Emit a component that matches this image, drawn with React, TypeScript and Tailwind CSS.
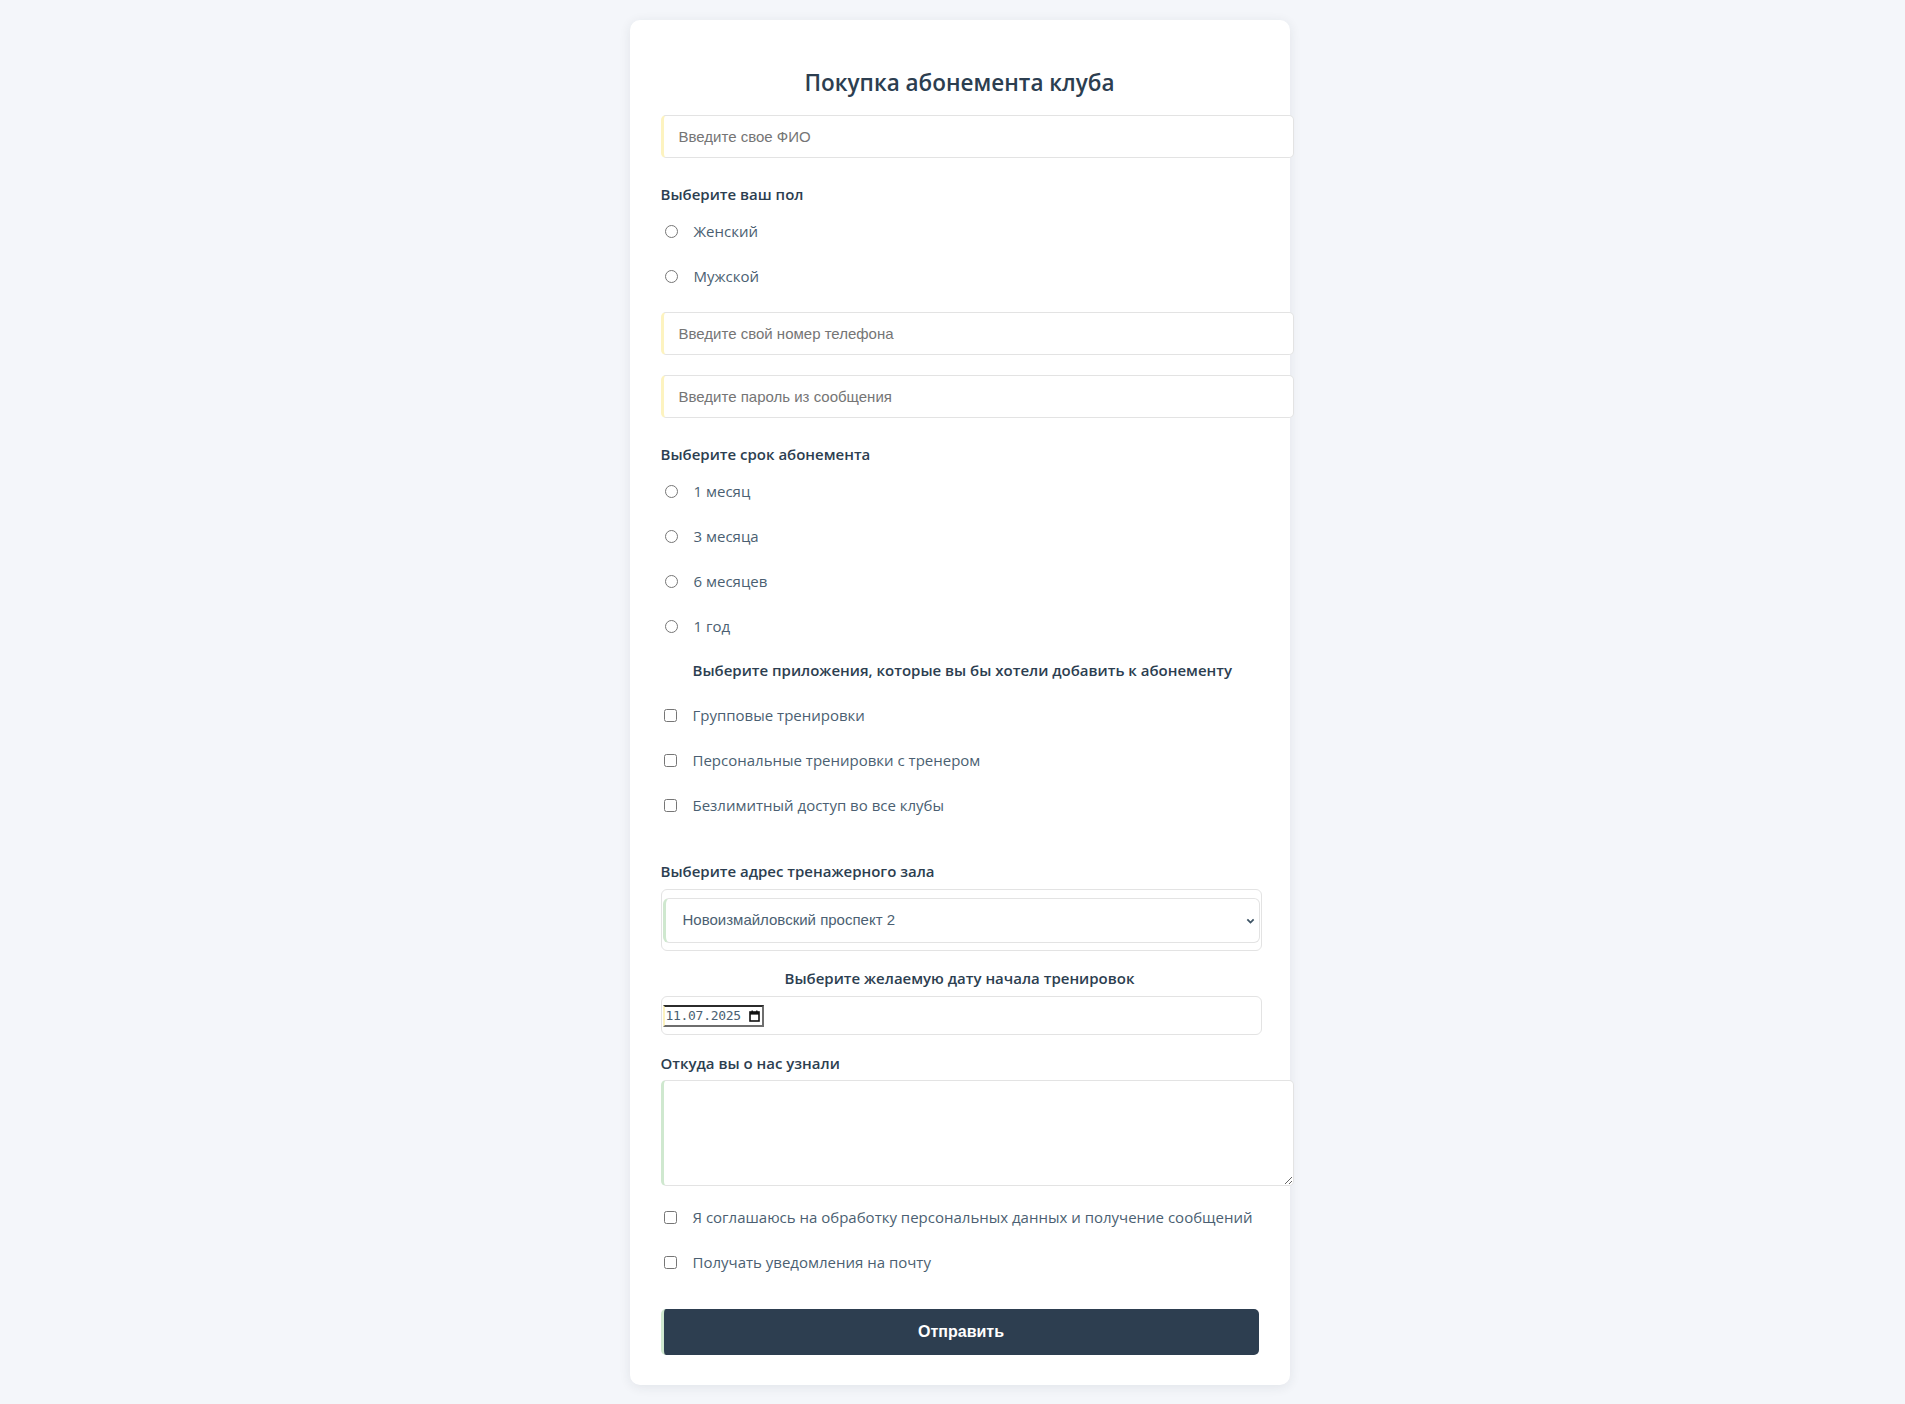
import { useState } from "react";

const sans = "font-['Open_Sans','Noto_Sans',sans-serif]";
const arial = "font-['Liberation_Sans',Arial,sans-serif]";

function FieldLabel({ children, center }: { children: React.ReactNode; center?: boolean }) {
  return (
    <div
      className={`${sans} h-5 text-[15px] font-semibold leading-5 text-[#2c3e50] ${
        center ? "text-center" : ""
      }`}
    >
      {children}
    </div>
  );
}

function TextInput({ placeholder }: { placeholder: string }) {
  return (
    <input
      type="text"
      placeholder={placeholder}
      className={`${arial} block h-[43px] w-[633px] rounded-[5px] border border-l-[3px] border-[#e3e3e3] border-l-[#fdf3c0] bg-white pl-[15px] text-[15px] text-[#333] outline-none placeholder:text-[#757575]`}
    />
  );
}

function Choice({
  type,
  name,
  label,
}: {
  type: "radio" | "checkbox";
  name: string;
  label: string;
}) {
  return (
    <label className="flex h-[25px] items-center">
      <input
        type={type}
        name={name}
        className={`m-0 h-[13px] w-[13px] shrink-0 ${type === "radio" ? "ml-[4px]" : "ml-[3px]"}`}
      />
      <span className={`${sans} ml-[16px] text-[15px] text-[#4b5f72]`}>{label}</span>
    </label>
  );
}

// native date input follows the browser locale, so the ru format is drawn by hand
function DateField({ value }: { value: string }) {
  return (
    <div className="flex h-[22px] w-[101px] items-center justify-between border-2 border-t-[#2b2b2b] border-r-[#6e6e6e] border-b-[#6e6e6e] border-l-[#fdf3c0] bg-white pr-[2px] pl-[1px]">
      <span className="font-['DejaVu_Sans_Mono',monospace] text-[13px] leading-none tracking-[-0.3px] text-[#4b5f72]">
        {value}
      </span>
      <svg className="h-[12px] w-[11px] shrink-0" viewBox="0 0 11 12" fill="none">
        <rect x="1" y="2" width="9" height="9" stroke="#111" strokeWidth="1.6" />
        <rect x="1" y="2" width="9" height="2.6" fill="#111" />
        <path d="M3.2 0.5v2.2M7.8 0.5v2.2" stroke="#111" strokeWidth="1.4" />
      </svg>
    </div>
  );
}

export default function App() {
  const [date] = useState("11.07.2025");

  return (
    <div className="min-h-screen bg-[#f4f6fa] pt-[20px] pb-5 pl-[14px]">
      <form
        className="mx-auto w-[660px] rounded-[10px] bg-white px-[31px] pt-[47px] pb-[30px] shadow-[0_2px_12px_rgba(30,40,60,0.09)]"
        onSubmit={(e) => e.preventDefault()}
      >
        <h1
          className={`${sans} text-center text-[22.5px] font-semibold leading-[32px] text-[#2c3e50]`}
        >
          Покупка абонемента клуба
        </h1>

        <div className="mt-[16px]">
          <TextInput placeholder="Введите свое ФИО" />
        </div>

        <div className="mt-[26px]">
          <FieldLabel>Выберите ваш пол</FieldLabel>
        </div>
        <div className="mt-[15px] flex flex-col gap-[20px]">
          <Choice type="radio" name="sex" label="Женский" />
          <Choice type="radio" name="sex" label="Мужской" />
        </div>

        <div className="mt-[23px] flex flex-col gap-[20px]">
          <TextInput placeholder="Введите свой номер телефона" />
          <TextInput placeholder="Введите пароль из сообщения" />
        </div>

        <div className="mt-[26px]">
          <FieldLabel>Выберите срок абонемента</FieldLabel>
        </div>
        <div className="mt-[15px] flex flex-col gap-[20px]">
          <Choice type="radio" name="term" label="1 месяц" />
          <Choice type="radio" name="term" label="3 месяца" />
          <Choice type="radio" name="term" label="6 месяцев" />
          <Choice type="radio" name="term" label="1 год" />
        </div>

        <div className="mt-[21px] pl-[32px]">
          <FieldLabel>Выберите приложения, которые вы бы хотели добавить к абонементу</FieldLabel>
        </div>
        <div className="mt-[23px] flex flex-col gap-[20px]">
          <Choice type="checkbox" name="group" label="Групповые тренировки" />
          <Choice type="checkbox" name="personal" label="Персональные тренировки с тренером" />
          <Choice type="checkbox" name="unlimited" label="Безлимитный доступ во все клубы" />
        </div>

        <div className="mt-[43px]">
          <FieldLabel>Выберите адрес тренажерного зала</FieldLabel>
        </div>
        <div className="mt-[8px] w-[601px] rounded-[6px] border border-[#e3e3e3] pt-[8px] pb-[7px] pl-px pr-px">
          <div className="relative">
            <select
              className={`${arial} block h-[45px] w-full appearance-none rounded-[6px] border border-l-[3px] border-[#e3e3e3] border-l-[#cfe8cf] bg-white pl-[17px] text-[15px] text-[#4b5f72] outline-none`}
              defaultValue="1"
            >
              <option value="1">Новоизмайловский проспект 2</option>
              <option value="2">Московский проспект 10</option>
            </select>
            <svg
              className="pointer-events-none absolute right-[5px] top-1/2 h-[9px] w-[9px] -translate-y-1/2"
              viewBox="0 0 10 10"
              fill="none"
            >
              <path d="M1.5 3.2 5 6.7l3.5-3.5" stroke="#3f5566" strokeWidth="2" />
            </svg>
          </div>
        </div>

        <div className="mt-[17px]">
          <FieldLabel center>Выберите желаемую дату начала тренировок</FieldLabel>
        </div>
        <div className="mt-[8px] flex h-[39px] w-[601px] items-center rounded-[6px] border border-[#e3e3e3] pl-px">
          <DateField value={date} />
        </div>

        <div className="mt-[18px]">
          <FieldLabel>Откуда вы о нас узнали</FieldLabel>
        </div>
        <textarea className="mt-[7px] block h-[106px] w-[633px] rounded-[5px] border border-l-[3px] border-[#e3e3e3] border-l-[#cfe8cf] bg-white outline-none" />

        <div className="mt-[19px] flex flex-col gap-[20px]">
          <Choice
            type="checkbox"
            name="agree"
            label="Я соглашаюсь на обработку персональных данных и получение сообщений"
          />
          <Choice type="checkbox" name="mail" label="Получать уведомления на почту" />
        </div>

        <button
          type="submit"
          className={`${arial} mt-[34px] block h-[46px] w-[598px] rounded-[5px] border-l-[3px] border-l-[#cfe8cf] bg-[#2d3e50] text-[16px] font-bold text-white`}
        >
          Отправить
        </button>
      </form>
    </div>
  );
}
